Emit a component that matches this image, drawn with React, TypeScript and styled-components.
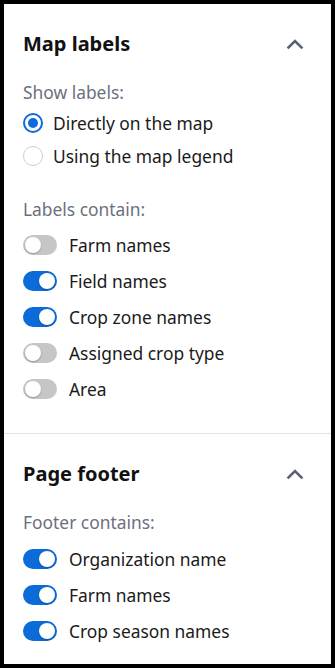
import React, { useState } from 'react';
import styled, { createGlobalStyle } from 'styled-components';

const GlobalStyle = createGlobalStyle`
  html, body {
    margin: 0;
    padding: 0;
    background: #000;
  }
  body {
    font-family: "Noto Sans", "Open Sans", sans-serif;
    -webkit-font-smoothing: antialiased;
  }
`;

/* ── styled components ── */

const Frame = styled.div`
  box-sizing: border-box;
  width: 335px;
  height: 668px;
  padding: 4px;
  background: #000;
`;

const Panel = styled.div`
  height: 100%;
  background: #fff;
  display: flex;
  flex-direction: column;
  overflow: hidden;
`;

const Section = styled.section<{ $last?: boolean }>`
  padding: 28px 24px 32px 19px;
  border-bottom: ${(p) => (p.$last ? 'none' : '1px solid #e2e2e2')};
`;

const SectionHeader = styled.div`
  display: flex;
  align-items: center;
  justify-content: space-between;
  height: 24px;
  margin-bottom: 24px;
`;

const Title = styled.h2`
  margin: 0;
  font-size: 20px;
  line-height: 24px;
  font-weight: 700;
  color: #111;
`;

const CollapseButton = styled.button`
  width: 24px;
  height: 24px;
  padding: 0;
  border: none;
  background: none;
  display: flex;
  align-items: center;
  justify-content: center;
  cursor: pointer;
`;

const GroupLabel = styled.div`
  font-size: 17.4px;
  line-height: 24px;
  color: #6b7080;
`;

const OptionList = styled.div<{ $gap: number; $top: number }>`
  display: flex;
  flex-direction: column;
  gap: ${(p) => p.$gap}px;
  margin-top: ${(p) => p.$top}px;
`;

const GroupBlock = styled.div`
  & + & {
    margin-top: 29px;
  }
`;

const OptionRow = styled.label<{ $gap: number }>`
  display: flex;
  align-items: center;
  gap: ${(p) => p.$gap}px;
  height: 24px;
  font-size: 17.4px;
  line-height: 24px;
  color: #1a1a1a;
  cursor: pointer;
  white-space: nowrap;
`;

const RadioCircle = styled.span<{ $checked: boolean }>`
  box-sizing: border-box;
  width: 20px;
  height: 20px;
  border-radius: 50%;
  border: ${(p) => (p.$checked ? '2px solid #0b6bd8' : '1px solid #cfcfd4')};
  display: flex;
  align-items: center;
  justify-content: center;
  flex-shrink: 0;

  &::after {
    content: '';
    width: 10px;
    height: 10px;
    border-radius: 50%;
    background: ${(p) => (p.$checked ? '#0b6bd8' : 'transparent')};
  }
`;

const SwitchTrack = styled.span<{ $on: boolean }>`
  box-sizing: border-box;
  position: relative;
  width: 34px;
  height: 20px;
  border-radius: 10px;
  background: ${(p) => (p.$on ? '#0b6bd8' : '#c6c6c6')};
  flex-shrink: 0;
`;

const SwitchKnob = styled.span<{ $on: boolean }>`
  position: absolute;
  top: 2px;
  left: ${(p) => (p.$on ? '16px' : '2px')};
  width: 16px;
  height: 16px;
  border-radius: 50%;
  background: #fff;
  box-shadow: 0 1px 2px rgba(0, 0, 0, 0.25);
`;

/* ── parts ── */

const ChevronUp = () => (
  <svg width="24" height="24" viewBox="0 0 24 24" fill="none">
    <path d="M5.5 15.5 L12 9 L18.5 15.5" stroke="#5b6175" strokeWidth="2.6" strokeLinecap="square" />
  </svg>
);

const Radio: React.FC<{ label: string; checked: boolean; onSelect: () => void }> = ({
  label,
  checked,
  onSelect,
}) => (
  <OptionRow $gap={10} onClick={onSelect}>
    <RadioCircle $checked={checked} />
    {label}
  </OptionRow>
);

const Toggle: React.FC<{ label: string; on: boolean; onToggle: () => void }> = ({
  label,
  on,
  onToggle,
}) => (
  <OptionRow $gap={12} onClick={onToggle}>
    <SwitchTrack $on={on}>
      <SwitchKnob $on={on} />
    </SwitchTrack>
    {label}
  </OptionRow>
);

/* ── component ── */

const App: React.FC = () => {
  const [placement, setPlacement] = useState<'map' | 'legend'>('map');
  const [labels, setLabels] = useState<Record<string, boolean>>({
    'Farm names': false,
    'Field names': true,
    'Crop zone names': true,
    'Assigned crop type': false,
    Area: false,
  });
  const [footer, setFooter] = useState<Record<string, boolean>>({
    'Organization name': true,
    'Farm names': true,
    'Crop season names': true,
  });

  return (
    <>
      <GlobalStyle />
      <Frame>
        <Panel>
          <Section>
            <SectionHeader>
              <Title>Map labels</Title>
              <CollapseButton aria-label="Collapse">
                <ChevronUp />
              </CollapseButton>
            </SectionHeader>

            <GroupBlock>
              <GroupLabel>Show labels:</GroupLabel>
              <OptionList $gap={9} $top={7}>
                <Radio
                  label="Directly on the map"
                  checked={placement === 'map'}
                  onSelect={() => setPlacement('map')}
                />
                <Radio
                  label="Using the map legend"
                  checked={placement === 'legend'}
                  onSelect={() => setPlacement('legend')}
                />
              </OptionList>
            </GroupBlock>

            <GroupBlock>
              <GroupLabel>Labels contain:</GroupLabel>
              <OptionList $gap={12} $top={12}>
                {Object.keys(labels).map((k) => (
                  <Toggle
                    key={k}
                    label={k}
                    on={labels[k]}
                    onToggle={() => setLabels({ ...labels, [k]: !labels[k] })}
                  />
                ))}
              </OptionList>
            </GroupBlock>
          </Section>

          <Section $last>
            <SectionHeader>
              <Title>Page footer</Title>
              <CollapseButton aria-label="Collapse">
                <ChevronUp />
              </CollapseButton>
            </SectionHeader>

            <GroupBlock>
              <GroupLabel>Footer contains:</GroupLabel>
              <OptionList $gap={12} $top={13}>
                {Object.keys(footer).map((k) => (
                  <Toggle
                    key={k}
                    label={k}
                    on={footer[k]}
                    onToggle={() => setFooter({ ...footer, [k]: !footer[k] })}
                  />
                ))}
              </OptionList>
            </GroupBlock>
          </Section>
        </Panel>
      </Frame>
    </>
  );
};

export default App;
